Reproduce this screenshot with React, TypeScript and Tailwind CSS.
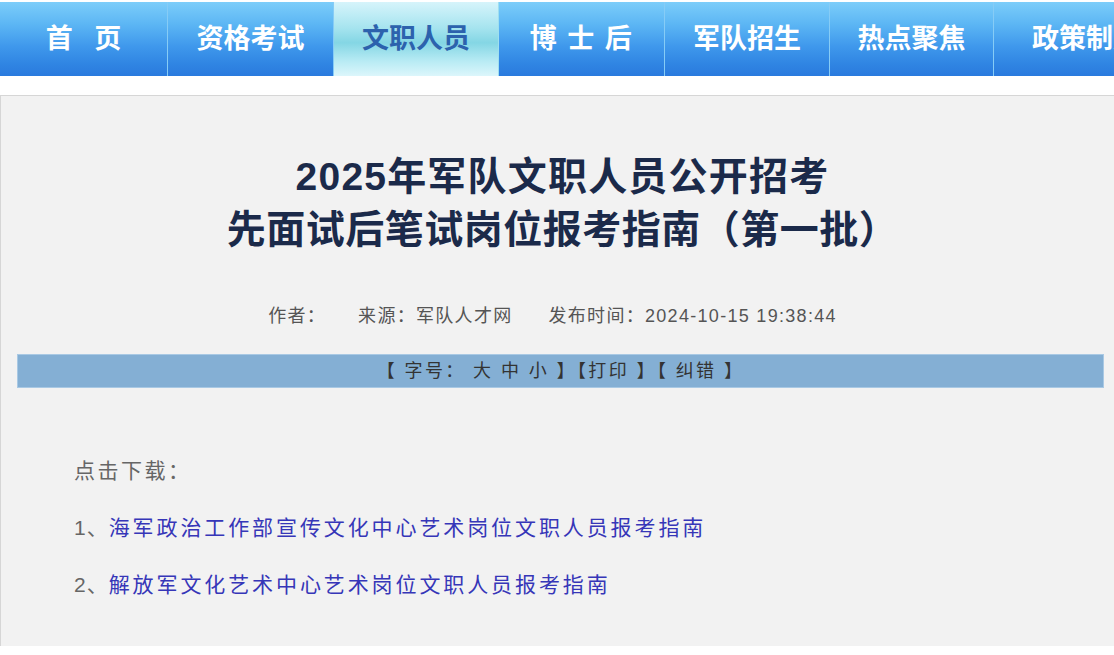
const NAV = [
  { label: "首 页", w: "w-[168px]", extra: "tracking-[7px] pl-[7px]" },
  { label: "资格考试", w: "w-[166px]", extra: "" },
  { label: "文职人员", w: "w-[165px]", active: true, extra: "" },
  { label: "博 士 后", w: "w-[166px]", extra: "tracking-[1.5px]" },
  { label: "军队招生", w: "w-[165px]", extra: "" },
  { label: "热点聚焦", w: "w-[164px]", extra: "" },
  { label: "政策制度", w: "w-[166px]", extra: "pl-[38px] !justify-start" },
];

const LINKS = [
  "海军政治工作部宣传文化中心艺术岗位文职人员报考指南",
  "解放军文化艺术中心艺术岗位文职人员报考指南",
];

const FONT = "font-['Liberation_Sans','Noto_Sans_CJK_SC',sans-serif]";

export default function App() {
  return (
    <div className={`h-[655px] w-[1114px] overflow-hidden bg-white ${FONT}`}>
      <nav className="mt-[2px] flex h-[74px] overflow-hidden whitespace-nowrap">
        {NAV.map((item) => (
          <div
            key={item.label}
            className={`flex h-full shrink-0 items-center justify-center border-r text-[27px] font-bold ${item.w} ${item.extra} ${
              item.active
                ? "border-[#9edff0] bg-[linear-gradient(to_bottom,#d6f4fb_0%,#a6e4ef_35%,#84d6e4_55%,#b8ebf4_80%,#dcf6fb_100%)] text-[#2c62ad]"
                : "border-[#86ccf6] bg-[linear-gradient(to_bottom,#7ccdfa_0%,#5cb6f4_30%,#3f98ec_60%,#2f84e2_85%,#2a7ade_100%)] text-white"
            }`}
          >
            {item.label}
          </div>
        ))}
      </nav>

      <div className="mt-[19px] h-[551px] border-l border-t border-[#d6d6d6] bg-[#f2f2f2]">
        <h1 className="pl-[10px] pt-[54px] text-center text-[39px] font-bold leading-[53px] tracking-[0.5px] text-[#1b2a4a]">
          <span className="tracking-[1.2px]">2025年军队文职人员公开招考</span>
          <br />
          先面试后笔试岗位报考指南（第一批）
        </h1>

        <div className="mt-[48px] flex h-[24px] items-center justify-center pr-[10px] text-[18px] leading-[24px] tracking-[1.3px] text-[#555]">
          <span>作者：</span>
          <span className="ml-[32px]">来源：军队人才网</span>
          <span className="ml-[36px]">发布时间：2024-10-15 19:38:44</span>
        </div>

        <div className="ml-[16px] mr-[10px] mt-[26px] flex h-[34px] items-center justify-center border border-[#a9c9e4] bg-[#84afd4] text-[18px] tracking-[2.4px] text-[#333]">
          【 字号： 大 中 小 】【打印 】【 纠错 】
        </div>

        <div className="mt-[54px] pl-[73px] text-[21px]">
          <p className="h-[57px] leading-[57px] tracking-[2.5px] text-[#666]">点击下载：</p>
          {LINKS.map((text, i) => (
            <p key={text} className="h-[57px] leading-[57px]">
              <span className="tracking-[1px] text-[#666]">{i + 1}、</span>
              <a className="tracking-[2.9px] text-[#3636b8]">{text}</a>
            </p>
          ))}
        </div>
      </div>
    </div>
  );
}
